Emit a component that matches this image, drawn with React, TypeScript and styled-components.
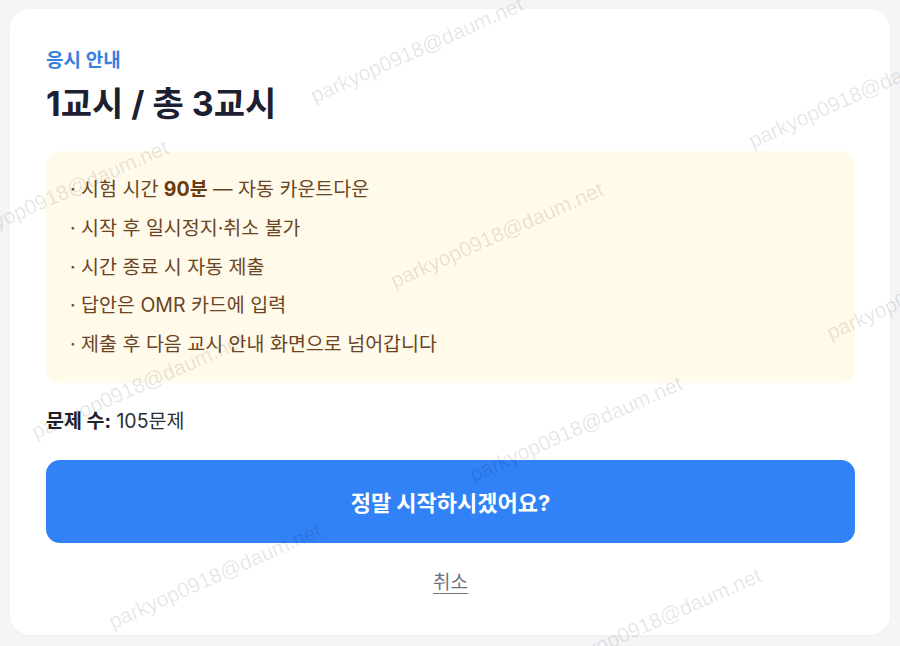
import styled, { createGlobalStyle } from "styled-components";

const GlobalStyle = createGlobalStyle`
  html, body {
    margin: 0;
    padding: 0;
    background: #f4f5f7;
  }
  body {
    font-family: Inter, "Noto Sans CJK KR", sans-serif;
  }
  * {
    box-sizing: border-box;
  }
`;

const PageStyled = styled.div`
  position: relative;
  width: 900px;
  height: 646px;
  padding: 9px 10px 11px 10px;
  overflow: hidden;
`;

const CardStyled = styled.div`
  background: #ffffff;
  border-radius: 20px;
  height: 100%;
  padding: 40px 35px 0 36px;
  display: flex;
  flex-direction: column;
  box-shadow: 0 1px 3px rgba(0, 0, 0, 0.03);
`;

const LabelStyled = styled.span`
  font-size: 19px;
  line-height: 24px;
  font-weight: 600;
  color: #3a7fe0;
`;

const TitleStyled = styled.h1`
  margin: 10px 0 0 0;
  font-size: 34px;
  line-height: 42px;
  font-weight: 700;
  color: #1c2030;
`;

const NoticeBoxStyled = styled.ul`
  list-style: none;
  margin: 26px 0 0 0;
  padding: 19px 24px 19px 24px;
  background: #fffaea;
  border-radius: 14px;
  display: flex;
  flex-direction: column;
`;

const NoticeItemStyled = styled.li`
  font-size: 19.5px;
  line-height: 38.8px;
  color: #6b4423;
  white-space: nowrap;

  b {
    font-weight: 700;
    color: #6a3a12;
  }
`;

const CountStyled = styled.p`
  margin: 25px 0 0 0;
  font-size: 19.5px;
  line-height: 26px;
  color: #2b2f38;

  b {
    font-weight: 700;
    color: #1e222b;
  }
`;

const StartButtonStyled = styled.button`
  margin-top: 26px;
  height: 83px;
  border: none;
  border-radius: 14px;
  background: #3182f6;
  color: #ffffff;
  font-family: inherit;
  font-size: 22px;
  font-weight: 700;
  cursor: pointer;
`;

const CancelStyled = styled.button`
  align-self: center;
  margin-top: 28px;
  border: none;
  background: none;
  padding: 0;
  font-family: inherit;
  font-size: 19px;
  line-height: 24px;
  color: #6b7280;
  text-decoration: underline;
  text-underline-offset: 4px;
  cursor: pointer;
`;

const WatermarkLayerStyled = styled.div`
  position: absolute;
  inset: 0;
  pointer-events: none;
`;

const WatermarkStyled = styled.span`
  position: absolute;
  transform: translate(-50%, -50%) rotate(-24deg);
  font-family: "Liberation Sans", Arial, sans-serif;
  font-size: 21px;
  color: rgba(0, 0, 0, 0.11);
  white-space: nowrap;
`;

const watermarks = [
  { x: 417, y: 50 },
  { x: 855, y: 95 },
  { x: 62, y: 193 },
  { x: 497, y: 235 },
  { x: 933, y: 287 },
  { x: 138, y: 386 },
  { x: 576, y: 429 },
  { x: 215, y: 576 },
  { x: 655, y: 621 },
];

const notices = [
  <>
    · 시험 시간 <b>90분</b> — 자동 카운트다운
  </>,
  <>· 시작 후 일시정지·취소 불가</>,
  <>· 시간 종료 시 자동 제출</>,
  <>· 답안은 OMR 카드에 입력</>,
  <>· 제출 후 다음 교시 안내 화면으로 넘어갑니다</>,
];

const App = () => {
  return (
    <>
      <GlobalStyle />
      <PageStyled>
        <CardStyled>
          <LabelStyled>응시 안내</LabelStyled>
          <TitleStyled>1교시 / 총 3교시</TitleStyled>
          <NoticeBoxStyled>
            {notices.map((item, i) => (
              <NoticeItemStyled key={i}>{item}</NoticeItemStyled>
            ))}
          </NoticeBoxStyled>
          <CountStyled>
            <b>문제 수:</b> 105문제
          </CountStyled>
          <StartButtonStyled>정말 시작하시겠어요?</StartButtonStyled>
          <CancelStyled>취소</CancelStyled>
        </CardStyled>
        <WatermarkLayerStyled>
          {watermarks.map((w, i) => (
            <WatermarkStyled key={i} style={{ left: w.x, top: w.y }}>
              parkyop0918@daum.net
            </WatermarkStyled>
          ))}
        </WatermarkLayerStyled>
      </PageStyled>
    </>
  );
};

export default App;
